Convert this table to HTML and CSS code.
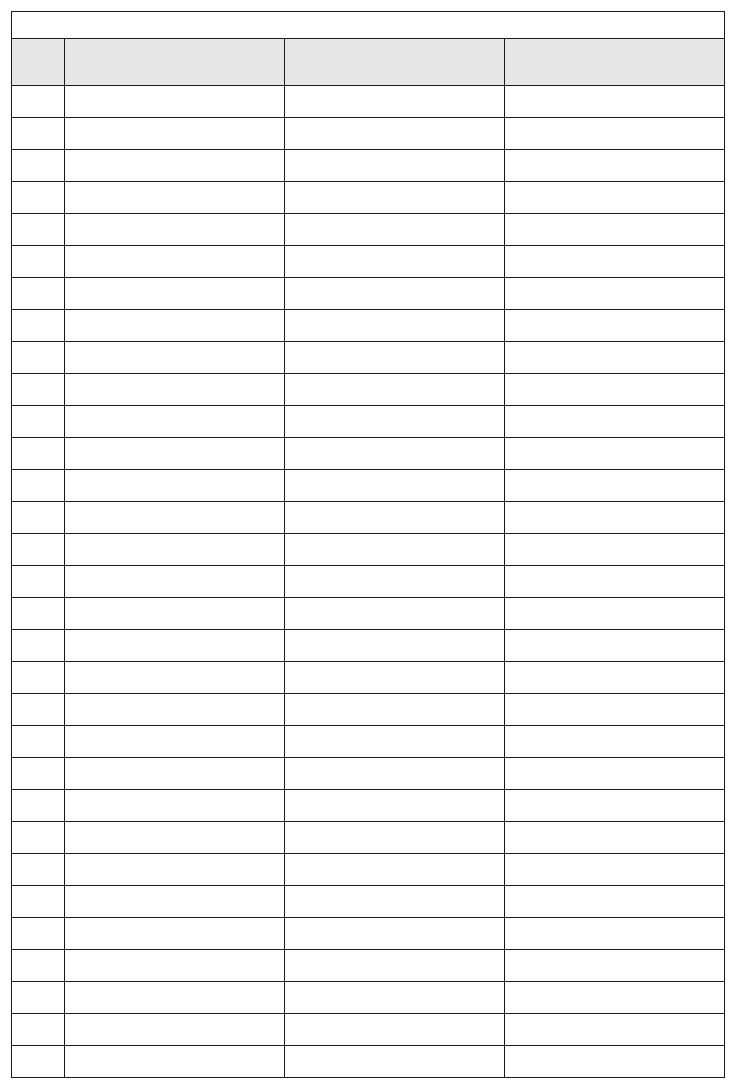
FILE: index.html
```html
<!DOCTYPE html>
<html>
<head>
<meta charset="utf-8">
<link rel="stylesheet" href="styles.css">
</head>
<body>
<table class="sheet">
<colgroup><col class="c-num"><col class="c-wide"><col class="c-wide"><col class="c-wide"></colgroup>
<tr class="title-row"><td colspan="4"></td></tr>
<tr class="head-row"><td></td><td></td><td></td><td></td></tr>
<tr class="row"><td></td><td></td><td></td><td></td></tr>
<tr class="row"><td></td><td></td><td></td><td></td></tr>
<tr class="row"><td></td><td></td><td></td><td></td></tr>
<tr class="row"><td></td><td></td><td></td><td></td></tr>
<tr class="row"><td></td><td></td><td></td><td></td></tr>
<tr class="row"><td></td><td></td><td></td><td></td></tr>
<tr class="row"><td></td><td></td><td></td><td></td></tr>
<tr class="row"><td></td><td></td><td></td><td></td></tr>
<tr class="row"><td></td><td></td><td></td><td></td></tr>
<tr class="row"><td></td><td></td><td></td><td></td></tr>
<tr class="row"><td></td><td></td><td></td><td></td></tr>
<tr class="row"><td></td><td></td><td></td><td></td></tr>
<tr class="row"><td></td><td></td><td></td><td></td></tr>
<tr class="row"><td></td><td></td><td></td><td></td></tr>
<tr class="row"><td></td><td></td><td></td><td></td></tr>
<tr class="row"><td></td><td></td><td></td><td></td></tr>
<tr class="row"><td></td><td></td><td></td><td></td></tr>
<tr class="row"><td></td><td></td><td></td><td></td></tr>
<tr class="row"><td></td><td></td><td></td><td></td></tr>
<tr class="row"><td></td><td></td><td></td><td></td></tr>
<tr class="row"><td></td><td></td><td></td><td></td></tr>
<tr class="row"><td></td><td></td><td></td><td></td></tr>
<tr class="row"><td></td><td></td><td></td><td></td></tr>
<tr class="row"><td></td><td></td><td></td><td></td></tr>
<tr class="row"><td></td><td></td><td></td><td></td></tr>
<tr class="row"><td></td><td></td><td></td><td></td></tr>
<tr class="row"><td></td><td></td><td></td><td></td></tr>
<tr class="row"><td></td><td></td><td></td><td></td></tr>
<tr class="row"><td></td><td></td><td></td><td></td></tr>
<tr class="row"><td></td><td></td><td></td><td></td></tr>
<tr class="row"><td></td><td></td><td></td><td></td></tr>
</table>
</body>
</html>
```

FILE: styles.css
```css
html, body {
  margin: 0;
  padding: 0;
  background: #ffffff;
  font-family: "Liberation Sans", Arial, sans-serif;
}
.sheet {
  margin: 11px 0 0 11px;
  width: 713px;
  table-layout: fixed;
  border-collapse: collapse;
}
.c-num { width: 53px; }
.c-wide { width: 220px; }
.sheet td {
  border: 1px solid #1a1a1a;
  padding: 0;
}
.title-row td { height: 26px; }
.head-row td {
  height: 46px;
  background: #e6e6e6;
}
.row td { height: 31px; }
```
